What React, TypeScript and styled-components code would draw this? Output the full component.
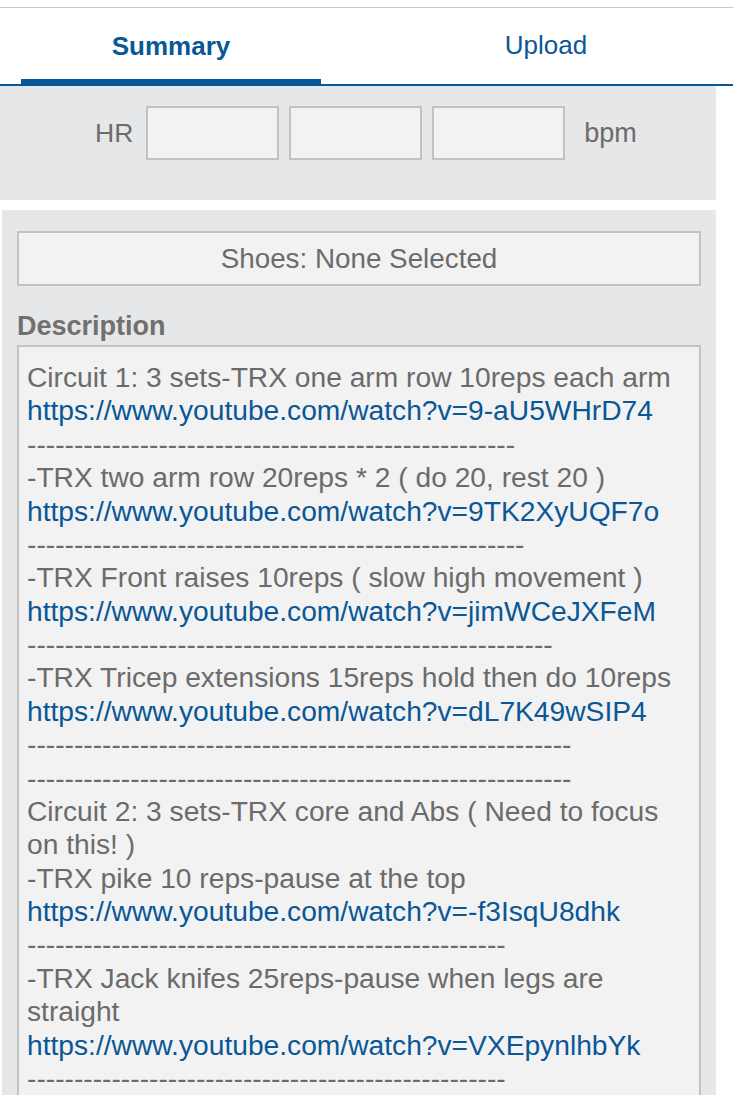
import React from 'react';
import styled, { createGlobalStyle } from 'styled-components';

const BLUE = '#0a5796';
const TEXT = '#6b6b6b';
const PANEL = '#e6e7e9';
const FIELD = '#f2f2f2';
const FIELD_BORDER = '#c2c2c2';

type Line = { text: string; link?: boolean };

const dashes = (n: number): Line => ({ text: '-'.repeat(n) });
const yt = (id: string): Line => ({ text: `https://www.youtube.com/watch?v=${id}`, link: true });

const description: Line[] = [
  { text: 'Circuit 1: 3 sets-TRX one arm row 10reps each arm' },
  yt('9-aU5WHrD74'),
  dashes(52),
  { text: '-TRX two arm row 20reps * 2 ( do 20, rest 20 )' },
  yt('9TK2XyUQF7o'),
  dashes(53),
  { text: '-TRX Front raises 10reps ( slow high movement )' },
  yt('jimWCeJXFeM'),
  dashes(56),
  { text: '-TRX Tricep extensions 15reps hold then do 10reps' },
  yt('dL7K49wSIP4'),
  dashes(58),
  dashes(58),
  { text: 'Circuit 2: 3 sets-TRX core and Abs ( Need to focus' },
  { text: 'on this! )' },
  { text: '-TRX pike 10 reps-pause at the top' },
  yt('-f3IsqU8dhk'),
  dashes(51),
  { text: '-TRX Jack knifes 25reps-pause when legs are' },
  { text: 'straight' },
  yt('VXEpynlhbYk'),
  dashes(51),
];

const GlobalStyle = createGlobalStyle`
  html, body {
    margin: 0;
    padding: 0;
    background: #ffffff;
    font-family: "Liberation Sans", Arial, sans-serif;
  }
`;

const App = () => (
  <Page>
    <GlobalStyle />
    <TabBar>
      <Tab active>Summary</Tab>
      <Tab>Upload</Tab>
    </TabBar>
    <HeartPanel>
      <HeartRow>
        <FieldLabel>HR</FieldLabel>
        <HrInput />
        <HrInput />
        <HrInput />
        <Unit>bpm</Unit>
      </HeartRow>
    </HeartPanel>
    <DetailPanel>
      <ShoesButton>Shoes: None Selected</ShoesButton>
      <SectionTitle>Description</SectionTitle>
      <DescriptionBox>
        {description.map((line, i) => (
          <TextLine key={i} link={line.link}>{line.text}</TextLine>
        ))}
      </DescriptionBox>
    </DetailPanel>
  </Page>
);

export default App;

const Page = styled.div`
  width: 733px;
  height: 1095px;
  overflow: hidden;
  padding-top: 7px;
  box-sizing: border-box;
`;

const TabBar = styled.div`
  display: grid;
  grid-template-columns: 300px 1fr;
  column-gap: 38px;
  padding-left: 21px;
  border-top: 1px solid #c9c9c9;
  border-bottom: 2px solid ${BLUE};
  height: 79px;
  box-sizing: border-box;
`;

const Tab = styled.div<{ active?: boolean }>`
  display: flex;
  align-items: center;
  justify-content: center;
  padding-bottom: 2px;
  font-size: 26px;
  color: ${BLUE};
  font-weight: ${({ active }) => (active ? 700 : 400)};
  ${({ active }) => active && `box-shadow: inset 0 -7px 0 ${BLUE}; margin-bottom: -2px;`}
`;

const HeartPanel = styled.div`
  width: 716px;
  height: 114px;
  background: ${PANEL};
  padding-top: 20px;
  box-sizing: border-box;
`;

const HeartRow = styled.div`
  display: flex;
  align-items: center;
  padding-left: 95px;
`;

const FieldLabel = styled.span`
  font-size: 26.5px;
  color: ${TEXT};
  margin-right: 13px;
`;

const HrInput = styled.div`
  width: 133px;
  height: 54px;
  box-sizing: border-box;
  background: ${FIELD};
  border: 2px solid ${FIELD_BORDER};
  margin-right: 10px;
`;

const Unit = styled.span`
  font-size: 27px;
  color: ${TEXT};
  margin-left: 9px;
`;

const DetailPanel = styled.div`
  width: 714px;
  margin: 10px 0 0 2px;
  background: ${PANEL};
  padding: 21px 15px 0 15px;
  box-sizing: border-box;
  height: 900px;
`;

const ShoesButton = styled.div`
  height: 55px;
  box-sizing: border-box;
  border: 2px solid ${FIELD_BORDER};
  background: ${FIELD};
  display: flex;
  align-items: center;
  justify-content: center;
  font-size: 27.8px;
  color: ${TEXT};
`;

const SectionTitle = styled.div`
  font-size: 27px;
  font-weight: 700;
  color: #707070;
  line-height: 33px;
  margin: 24px 0 2px 0;
`;

const DescriptionBox = styled.div`
  border: 2px solid ${FIELD_BORDER};
  background: ${FIELD};
  padding: 14px 8px 40px 8px;
`;

const TextLine = styled.div<{ link?: boolean }>`
  font-size: 28.2px;
  line-height: 33.38px;
  white-space: nowrap;
  color: ${({ link }) => (link ? BLUE : TEXT)};
`;
